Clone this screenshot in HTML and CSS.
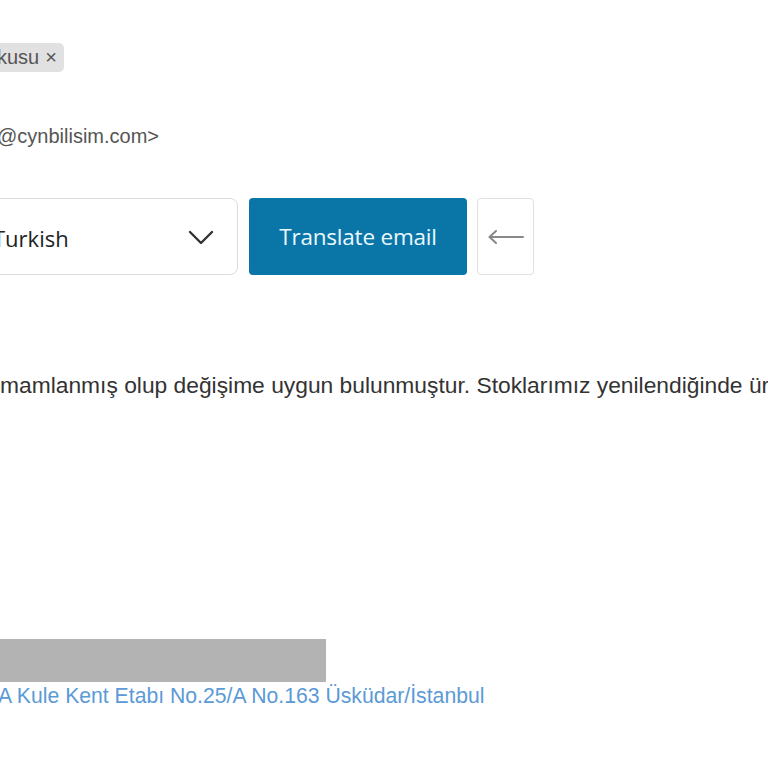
FILE: index.html
```
<!DOCTYPE html>
<html>
<head>
<meta charset="utf-8">
<link rel="stylesheet" href="styles.css">
</head>
<body>
<div class="page">
  <div class="tags">
    <span class="tag"><span class="tag-text">kusu</span><span class="tag-x">×</span></span>
  </div>
  <div class="from">@cynbilisim.com&gt;</div>
  <div class="translate-row">
    <div class="select">
      <span class="select-text">Turkish</span>
      <svg class="chev" width="26" height="16" viewBox="0 0 26 16"><path d="M2 2 L13 13 L24 2" fill="none" stroke="#333" stroke-width="2.4" stroke-linecap="round" stroke-linejoin="round"/></svg>
    </div>
    <button class="btn-primary">Translate email</button>
    <button class="btn-back">
      <svg width="38" height="14" viewBox="0 0 38 14"><path d="M36 7 H3 M9 1 L2.5 7 L9 13" fill="none" stroke="#888" stroke-width="2" stroke-linecap="round" stroke-linejoin="round"/></svg>
    </button>
  </div>
  <p class="body-text">mamlanmış olup değişime uygun bulunmuştur. Stoklarımız yenilendiğinde ürününüz size gönderilecektir.</p>
  <div class="signature">
    <div class="redact"></div>
    <div class="address">A Kule Kent Etabı No.25/A No.163 Üsküdar/İstanbul</div>
  </div>
</div>
</body>
</html>
```
FILE: styles.css
```
html, body {
  margin: 0;
  padding: 0;
  background: #fff;
  overflow: hidden;
  width: 768px;
  height: 768px;
}
.page {
  font-family: "Liberation Sans", Arial, sans-serif;
  color: #333;
  padding-top: 43px;
}
.tags {
  display: flex;
  margin-left: -13px;
}
.tag {
  display: inline-flex;
  align-items: center;
  height: 29px;
  padding: 0 7px 0 10px;
  background: #e1e1e1;
  border-radius: 5px;
  font-size: 20px;
  color: #555;
}
.tag-x {
  margin-left: 6px;
  font-size: 20px;
  color: #555;
}
.from {
  margin-top: 52px;
  margin-left: -3px;
  font-size: 20px;
  color: #555;
  line-height: 24px;
}
.translate-row {
  display: flex;
  gap: 11px;
  margin-top: 50px;
  margin-left: -18px;
  height: 77px;
}
.select {
  width: 256px;
  box-sizing: border-box;
  border: 1px solid #dcdcdc;
  border-radius: 8px;
  display: flex;
  align-items: center;
  justify-content: space-between;
  padding: 0 23px 0 10px;
  font-family: "Open Sans", "Noto Sans", sans-serif;
  font-size: 22px;
  color: #222;
}
.select-text {
  margin-top: 2px;
}
.chev {
  margin-top: 2px;
}
.btn-primary {
  width: 218px;
  border: none;
  border-radius: 4px;
  background: #0a76a8;
  color: #eaf8ff;
  font-family: "Open Sans", "Noto Sans", sans-serif;
  font-size: 22.5px;
  letter-spacing: -0.2px;
  padding: 0;
}
.btn-back {
  width: 57px;
  margin-left: -1px;
  background: #fff;
  border: 1px solid #e0e0e0;
  border-radius: 4px;
  display: flex;
  align-items: center;
  justify-content: center;
  padding: 0;
}
.body-text {
  margin: 97px 0 0 0;
  font-size: 22.8px;
  line-height: 27px;
  white-space: nowrap;
  color: #333;
}
.signature {
  margin-top: 240px;
}
.redact {
  width: 326px;
  height: 43px;
  background: #b3b3b3;
}
.address {
  margin-top: 1px;
  margin-left: -2px;
  font-size: 21.2px;
  line-height: 26px;
  color: #5b9ad6;
}
```
